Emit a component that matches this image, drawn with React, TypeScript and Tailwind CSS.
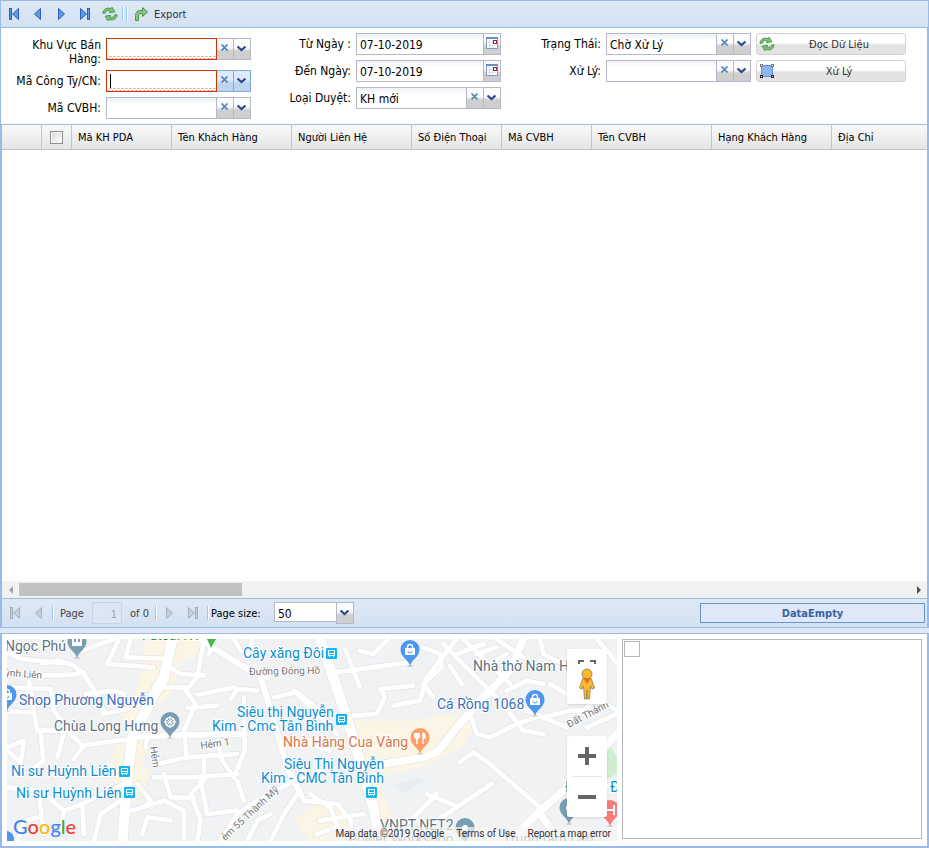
import type { ReactNode } from 'react';

/* ---------- icons ---------- */

type Tone = 'blue' | 'grey';
const tones = {
  blue: { fill: '#5b9be6', edge: '#1f56b5' },
  grey: { fill: '#c9ced6', edge: '#a3abb8' },
};

function NavIcon({ kind, tone }: { kind: 'first' | 'prev' | 'next' | 'last'; tone: Tone }) {
  const { fill, edge } = tones[tone];
  const flip = kind === 'next' || kind === 'last';
  const bar = kind === 'first' || kind === 'last';
  return (
    <svg viewBox="0 0 16 16" className="size-4" aria-hidden="true">
      <g transform={flip ? 'translate(15 0) scale(-1 1)' : undefined} fill={fill} stroke={edge} strokeWidth="0.9">
        {bar && <rect x="3.500" y="2.500" width="2" height="11" />}
        <path d={bar ? 'M12.500 2.500v11L6.500 8z' : 'M10.500 2.500v11L4.500 8z'} strokeLinejoin="round" />
      </g>
    </svg>
  );
}

function RefreshIcon() {
  return (
    <svg viewBox="0 0 18 16" className="size-4" preserveAspectRatio="none" aria-hidden="true">
      <g fill="#7cc576" stroke="#3c8c3c" strokeWidth="0.9" strokeLinejoin="round">
        <path d="M1 7.200C1.400 3.200 5.500 1 10 2.600L11.300 1.200 14.500 5.800 8.500 6.800 9.400 5C6.500 4 4.200 5 3.600 7.200z" />
        <path d="M17 8.800C16.600 12.800 12.500 15 8 13.400L6.700 14.800 3.500 10.200 9.500 9.200 8.600 11C11.500 12 13.800 11 14.400 8.800z" />
      </g>
    </svg>
  );
}

function ExportIcon() {
  return (
    <svg viewBox="0 0 16 16" className="size-4" aria-hidden="true">
      <path
        d="M2.500 14.500V9.500C2.500 6 4.500 4.500 8 4.500H9.500V1.500L14.500 6 9.500 10.500V7.500H8C6.500 7.500 5.500 8.200 5.500 10V14.500z"
        fill="#86c97e"
        stroke="#4a9448"
        strokeLinejoin="round"
      />
    </svg>
  );
}

function ShapeIcon() {
  return (
    <svg viewBox="0 0 16 16" className="size-4" aria-hidden="true">
      <rect x="2.500" y="2.500" width="11" height="11" fill="#8fb4ee" stroke="#5d8bd6" />
      <g fill="#fff" strokeWidth="1">
        <rect x="1.500" y="1.500" width="2" height="2" stroke="#777" />
        <rect x="12.500" y="1.500" width="2" height="2" stroke="#777" />
        <rect x="1.500" y="12.500" width="2" height="2" stroke="#222" />
        <rect x="12.500" y="12.500" width="2" height="2" stroke="#222" />
      </g>
    </svg>
  );
}

function CalendarIcon() {
  return (
    <svg viewBox="0 0 16 20" className="h-5 w-4" aria-hidden="true">
      <rect x="2.500" y="3.500" width="11" height="11" fill="#fff" stroke="#7e99c4" />
      <rect x="2" y="3" width="12" height="2" fill="#6d8cc0" />
      <path d="M4 8.500h8M4 11.500h8M5.500 6v8M8.500 6v8" stroke="#d5deec" />
      <rect x="9.500" y="6.500" width="3" height="3" fill="#fff" stroke="#9c2033" />
    </svg>
  );
}

function ClearIcon() {
  return (
    <svg viewBox="0 0 16 20" className="h-5 w-4" aria-hidden="true">
      <path d="M4.500 5.500l6 6M10.500 5.500l-6 6" stroke="#4a7fb8" strokeWidth="1.700" />
    </svg>
  );
}

function ChevronIcon() {
  return (
    <svg viewBox="0 0 16 20" className="h-5 w-4" aria-hidden="true">
      <path d="M3.500 7.500l4 3.500 4-3.500" fill="none" stroke="#2b4a8b" strokeWidth="2.200" />
    </svg>
  );
}

/* ---------- form ---------- */

const triggerBase = 'flex h-[22px] w-[17px] items-center border-y border-r';
const triggerGrey = `${triggerBase} border-[#b5b8c8] bg-linear-to-b from-[#fbfbfb] from-45% to-[#cfcfcf] to-60%`;
const triggerBlue = `${triggerBase} border-[#7eadd9] bg-linear-to-b from-[#dfeaf8] from-45% to-[#bdd3ef] to-60%`;

type FieldProps = {
  id: string;
  label: string;
  value?: string;
  kind?: 'combo' | 'date';
  invalid?: boolean;
  active?: boolean;
  wrapped?: boolean;
};

function Field({ id, label, value = '', kind = 'combo', invalid, active, wrapped }: FieldProps) {
  const trigger = active ? triggerBlue : triggerGrey;
  return (
    <div className="flex items-start">
      <label
        htmlFor={id}
        className={
          wrapped
            ? 'mr-[5px] w-[100px] text-right leading-[14px]'
            : 'mr-[5px] w-[100px] pt-1 text-right leading-[14px]'
        }
      >
        {label}
      </label>
      <div className="relative flex w-[145px]">
        <input
          id={id}
          type="text"
          defaultValue={value}
          className={
            invalid
              ? 'h-[22px] min-w-0 flex-1 border border-[#cc3300] bg-[repeating-conic-gradient(#f88d8d_0_25%,#fff_0_50%)] bg-[length:4px_3px] bg-bottom bg-repeat-x px-[3px] pt-[2px] outline-none'
              : 'h-[22px] min-w-0 flex-1 border border-[#b5b8c8] bg-linear-to-b from-[#eef1f5] to-white to-30% px-[3px] pt-[2px] outline-none'
          }
        />
        {active && <span className="absolute top-1 left-1 h-[14px] w-px bg-black" />}
        {kind === 'date' ? (
          <button type="button" aria-label={`${label} calendar`} className={trigger}>
            <CalendarIcon />
          </button>
        ) : (
          <>
            <button type="button" aria-label={`${label} clear`} className={trigger}>
              <ClearIcon />
            </button>
            <button type="button" aria-label={`${label} open`} className={trigger}>
              <ChevronIcon />
            </button>
          </>
        )}
      </div>
    </div>
  );
}

function ActionButton({ icon, children }: { icon: ReactNode; children: ReactNode }) {
  return (
    <button
      type="button"
      className="flex h-[22px] w-[150px] items-center rounded-[3px] border border-[#d1d1d1] bg-linear-to-b from-white from-45% to-[#e3e3e3] to-55% pr-[2px] pl-[2px] text-[11px] text-[#333]"
    >
      {icon}
      <span className="flex-1 pt-[2px] text-center">{children}</span>
    </button>
  );
}

function Separator() {
  return <span className="h-[14px] w-[2px] border-l border-[#98c8ff] bg-white" />;
}

/* ---------- map ---------- */

const westRoads = [
  'M9 55L50 75 180 88M115 88L165 80 205 92 240 120 290 200M110 125L205 122 240 115M235 50L330 15',
  'M345 15L310 90 450 100M380 15L365 70 500 75M245 180L330 170 360 180M290 200L298 240 370 225',
  'M9 160L140 165 150 230 200 300 235 335 300 325 385 315M9 232L90 235 100 290 180 290M75 140L90 230',
  'M9 340L60 320 50 385 12 352M110 290L118 380 75 415M180 295L160 370M235 340L210 375',
  'M480 90L530 120 600 125M600 15L580 130 545 170 575 210 540 290 548 370M450 160L550 160M580 182L690 160',
  'M550 222L640 215M548 370L700 360M430 310L425 340M455 340L460 390 548 370M640 320L655 380 690 430',
  'M720 190L722 350 690 430M760 170L700 165 680 195M450 430L560 430 700 420M480 420L500 490 570 490',
  'M400 450L440 500 420 520M380 530L480 500 540 530 540 621M415 600L430 550 500 560M590 440L610 540 700 530',
  'M600 380L600 440 560 480 590 560 580 621M9 460L110 470 180 530 235 510 360 450M105 480L120 600M180 530L170 600',
  'M235 510L240 600M270 621L290 540 350 500M40 621L60 560 105 550M630 15L615 60M690 15L710 50M745 15L735 60',
  'M650 621L700 540 760 500 870 440 930 420M870 440L900 500 1000 510 1040 560 1040 621M800 621L840 540 880 480',
  'M730 621L760 560 800 540M700 440L720 500M870 170L920 220 1000 300M810 190L880 175 960 240M860 330L960 310',
];
const mediumRoads = ['M385 310L460 305 722 300', 'M590 15L640 50 740 110 790 130', 'M770 130L800 230 850 400 890 480'];
const eastRoads = [
  'M75 115L300 85 285 40M105 45L150 160M130 245L200 240 225 190 210 165 310 155M235 15L190 60 150 50',
  'M340 40L390 60 395 100 340 150 370 190M400 30L470 100 560 190M420 95L455 150M440 60L520 30M460 15L600 150',
  'M250 215L330 200 350 130 440 15M500 60L560 40M540 90L590 60M560 15L640 70M590 170L650 140 700 150',
  'M480 240L500 300 540 310 620 270 680 250M590 225L640 290 700 300M640 225L770 280 860 190 921 230',
  'M690 15L700 60 760 90M700 250L780 230 840 230M720 150L770 180M450 385L490 355 540 390 690 520',
  'M380 560L545 450M350 480L435 515M290 570L380 480M0 480L60 520 100 621M30 560L160 540M20 600L80 580',
  'M0 330L60 350M10 420L70 400M860 15L900 60 921 90M830 280L921 240M840 490L921 440',
];
const highways = ['M505 15L480 130 440 200 385 310 372 420 355 621', 'M948 15L988 130 1028 250 1068 380 1108 520 1128 621'];
const avenues = ['M190 395L340 370 385 352 440 280 520 190 600 110 640 15', 'M600 621L680 540 760 470 921 300', 'M690 540L750 621'];

function Roads({ stroke, grow }: { stroke: string; grow: number }) {
  return (
    <g fill="none" stroke={stroke} strokeLinejoin="round" strokeLinecap="round">
      <g strokeWidth={14 + grow}>
        {westRoads.map((d) => (
          <path key={d} d={d} />
        ))}
        {eastRoads.map((d) => (
          <path key={d} d={d} transform="translate(918 0)" />
        ))}
      </g>
      <g strokeWidth={18 + grow}>
        {mediumRoads.map((d) => (
          <path key={d} d={d} />
        ))}
      </g>
      <g strokeWidth={23 + grow}>
        {avenues.map((d) => (
          <path key={d} d={d} transform="translate(918 0)" />
        ))}
      </g>
      <g strokeWidth={31 + grow}>
        {highways.map((d) => (
          <path key={d} d={d} />
        ))}
      </g>
    </g>
  );
}

function Pin({ x, y, color, children }: { x: number; y: number; color: string; children?: ReactNode }) {
  return (
    <g transform={`translate(${x} ${y})`}>
      <ellipse cx="0" cy="0" rx="3" ry="1" fill="#000" opacity="0.15" />
      <path d="M0 0C-2 -7 -9.500 -9 -9.500 -16.500A9.500 9.500 0 0 1 9.500 -16.500C9.500 -9 2 -7 0 0z" fill={color} />
      <g transform="translate(0 -16)">{children}</g>
    </g>
  );
}

const bag = (
  <g>
    <path d="M-2.500 -1v-2a2.500 2.500 0 0 1 5 0v2" fill="none" stroke="#fff" strokeWidth="1.400" />
    <rect x="-5" y="-2" width="10" height="7" rx="1" fill="#fff" />
    <path d="M-2 1a2 2 0 0 0 4 0" fill="none" stroke="#4c97f0" />
  </g>
);

function BusStop({ x, y }: { x: number; y: number }) {
  return (
    <g transform={`translate(${x} ${y})`}>
      <rect width="11" height="11" rx="1" fill="#12b5f5" />
      <path d="M2.500 2.500h6v5h-6zM2.500 5.500h6M3.500 7.500v1.500M7.500 7.500v1.500" fill="none" stroke="#fff" />
    </g>
  );
}

function MapDrawing() {
  return (
    <svg
      viewBox="3 5 610 202"
      preserveAspectRatio="xMinYMin slice"
      className="block h-[202px] w-full"
      fontFamily="Roboto, sans-serif"
      fontSize="14"
    >
      <rect x="0" y="0" width="620" height="210" fill="#f1f2f4" />
      <g transform="scale(0.33333)">
        <path d="M425 15H600L585 65 530 80 500 180 450 225 425 300 435 330 415 400 440 415 405 500 370 510 330 440 315 400 330 335 375 320 350 240 390 190 415 100z" fill="#faf5e4" />
        <path d="M1048 260H1220L1385 235 1410 285 1370 345 1250 400 1120 430 1170 560 1110 600 1060 400z" fill="#faf5e4" />
        <path d="M918 520L1010 500 1050 560 1010 621H918L870 560z" fill="#faf5e4" />
        <path d="M1170 455L1240 430 1260 440 1200 480z" fill="#e8edf0" />
        <path d="M1808 320L1840 370V420L1770 450z" fill="#cdeecf" />
        <Roads stroke="#e2e4e7" grow={4} />
        <Roads stroke="#ffffff" grow={0} />
      </g>

      <Pin x={73} y={24} color="#7a9eb1">
        <path d="M-5 4v-7h2v3h2v-4h2v4h2v-3h2v7z" fill="#fff" />
      </Pin>
      <path d="M203 5h9l-5 9z" fill="#4db748" />
      <Pin x={3} y={77} color="#4c97f0">
        {bag}
      </Pin>
      <Pin x={166} y={104} color="#7a9eb1">
        <circle r="4.500" fill="none" stroke="#fff" strokeWidth="1.500" />
        <path d="M-6 0H6M0 -6V6M-4 -4L4 4M4 -4L-4 4" stroke="#fff" />
      </Pin>
      <Pin x={406} y={32} color="#4c97f0">
        {bag}
      </Pin>
      <Pin x={531} y={82} color="#4c97f0">
        {bag}
      </Pin>
      <Pin x={416} y={120} color="#ff9e67">
        <path d="M-3 -5v11M3 -5v11" stroke="#fff" strokeWidth="1.500" />
        <path d="M-6 -5v3a3 3 0 0 0 6 0v-3z" fill="#fff" />
        <path d="M3 -6c3 1 3 5 2 7h-2z" fill="#fff" />
      </Pin>
      <Pin x={461} y={210} color="#7a9eb1">
        <circle r="3" fill="#fff" />
      </Pin>
      <Pin x={565} y={190} color="#7a9eb1">
        <circle r="3" fill="#fff" />
      </Pin>
      <Pin x={606} y={192} color="#f77b7b">
        <path d="M-4 -5V5M4 -5V5M-4 0H4" stroke="#fff" strokeWidth="2" />
      </Pin>
      <circle cx="2" cy="205" r="8" fill="#4c97f0" />

      <BusStop x={322} y={14} />
      <BusStop x={332} y={80} />
      <BusStop x={362} y={153} />
      <BusStop x={115} y={132} />
      <BusStop x={120} y={153} />

      <g stroke="#ffffff" strokeWidth="2" strokeLinejoin="round" paintOrder="stroke">
        <g fill="#5d747f">
          <text x="1" y="17">Ngọc Phú</text>
          <text x="50" y="97">Chùa Long Hưng</text>
          <text x="469" y="37">Nhà thờ Nam Hòa</text>
          <text x="376" y="196">VNPT NET2</text>
          <text x="344" y="210">Power Workshop</text>
          <text x="499" y="210">Trung tâm Lap</text>
        </g>
        <text x="138" y="6" fill="#1c8c3c">Futsal K1</text>
        <g fill="#3d71b8">
          <text x="15" y="71">Shop Phương Nguyễn</text>
          <text x="433" y="75">Cá Rồng 1068</text>
        </g>
        <text x="279" y="113" fill="#d8764a">Nhà Hàng Cua Vàng</text>
        <g fill="#0c8fcf">
          <text x="239" y="24">Cây xăng Đôi</text>
          <text x="7" y="142">Ni sư Huỳnh Liên</text>
          <text x="12" y="164">Ni sư Huỳnh Liên</text>
          <text x="233" y="83">Siêu thị Nguyễn</text>
          <text x="208" y="97">Kim - Cmc Tân Bình</text>
          <text x="280" y="135">Siêu Thị Nguyễn</text>
          <text x="257" y="149">Kim - CMC Tân Bình</text>
          <text x="561" y="158">Đ</text>
          <text x="606" y="158">Đ</text>
        </g>
        <g fill="#757575" fontSize="10">
          <text x="1" y="42" transform="rotate(4 1 42)">ỳnh Liên</text>
          <text x="245" y="41" transform="rotate(-1 245 41)">Đường Đông Hồ</text>
          <text x="197" y="115" transform="rotate(-8 197 115)">Hẻm 1</text>
          <text x="146" y="113" transform="rotate(82 146 113)">Hẻm</text>
          <text x="221" y="207" transform="rotate(-43 221 207)">ẻm 55 Thành Mỹ</text>
          <text x="565" y="94" transform="rotate(-28 565 94)">Đất Thánh</text>
        </g>
      </g>
    </svg>
  );
}

function Pegman() {
  return (
    <svg viewBox="0 0 18 32" className="h-8 w-[18px]" aria-hidden="true">
      <g fill="#fdb92c" stroke="#8a7a58" strokeWidth="0.800">
        <path d="M5 10h8l3.500 10-2.500 1-1.500-3-1 13H9.500L9 22l-.5 9H6.500l-1-13L4 21l-2.500-1z" />
        <circle cx="9" cy="6" r="5" />
      </g>
      <path d="M5.500 10.500h7L9 16z" fill="#e0701c" />
    </svg>
  );
}

function MapPanel() {
  return (
    <section aria-label="Map" className="relative h-[202px] min-w-0 flex-1 overflow-hidden">
      <MapDrawing />
      <div className="absolute top-[10px] right-[10px] flex h-[55px] w-10 flex-col items-center justify-end rounded-[2px] bg-white pb-1 shadow">
        <svg viewBox="0 0 18 4" className="h-1 w-[18px]" aria-hidden="true">
          <path d="M1 4V1h5M12 1h5v3" fill="none" stroke="#666" strokeWidth="2" />
        </svg>
        <button type="button" aria-label="Street View" className="mt-1">
          <Pegman />
        </button>
      </div>
      <div className="absolute top-[97px] right-[10px] w-10 rounded-[2px] bg-white shadow">
        <button type="button" aria-label="Zoom in" className="flex h-10 w-10 items-center justify-center">
          <svg viewBox="0 0 18 18" className="size-[18px]" aria-hidden="true">
            <path d="M0 9h18M9 0v18" stroke="#666" strokeWidth="4" />
          </svg>
        </button>
        <div className="mx-[5px] h-px bg-[#e6e6e6]" />
        <button type="button" aria-label="Zoom out" className="flex h-10 w-10 items-center justify-center">
          <svg viewBox="0 0 18 18" className="size-[18px]" aria-hidden="true">
            <path d="M0 9h18" stroke="#666" strokeWidth="4" />
          </svg>
        </button>
      </div>
      <div className="absolute bottom-[1px] left-[6px] flex font-[Lato,sans-serif] text-[20px] leading-[28px] font-medium">
        <span className="text-[#4285f4]">G</span>
        <span className="text-[#ea4335]">o</span>
        <span className="text-[#fbbc05]">o</span>
        <span className="text-[#4285f4]">g</span>
        <span className="text-[#34a853]">l</span>
        <span className="text-[#ea4335]">e</span>
      </div>
      <div className="absolute right-0 bottom-0 flex h-[14px] gap-3 bg-[#f5f5f5]/70 px-[6px] font-[Roboto,sans-serif] text-[10px] leading-[14px] text-[#333]">
        <span>Map data ©2019 Google</span>
        <a href="#terms">Terms of Use</a>
        <a href="#report">Report a map error</a>
      </div>
    </section>
  );
}

/* ---------- grid ---------- */

const columns = [
  { title: 'Mã KH PDA', width: 'w-[100px]' },
  { title: 'Tên Khách Hàng', width: 'w-[120px]' },
  { title: 'Người Liên Hệ', width: 'w-[120px]' },
  { title: 'Số Điện Thoại', width: 'w-[90px]' },
  { title: 'Mã CVBH', width: 'w-[90px]' },
  { title: 'Tên CVBH', width: 'w-[120px]' },
  { title: 'Hạng Khách Hàng', width: 'w-[120px]' },
  { title: 'Địa Chỉ', width: 'w-auto' },
];

function CustomerGrid() {
  return (
    <section className="flex flex-1 flex-col border-x-2 border-t border-[#99bbe8]">
      <div className="flex-1">
        <table className="w-full table-fixed border-separate border-spacing-0 text-left text-[11px]">
          <thead>
            <tr className="h-[25px] bg-linear-to-b from-[#f9f9f9] to-[#e3e4e6]">
              <th className="w-10 border-r border-b border-[#c5c5c5]" />
              <th className="w-[30px] border-r border-b border-[#c5c5c5] p-0">
                <input
                  type="checkbox"
                  aria-label="Select all"
                  className="mx-auto block size-[13px] appearance-none border border-[#8f8f8f] bg-linear-to-br from-[#d4d8de] to-white shadow-[inset_0_0_0_1px_#f4f4f4]"
                />
              </th>
              {columns.map((c) => (
                <th key={c.title} className={`${c.width} border-r border-b border-[#c5c5c5] px-[6px] pt-[2px] pb-0 font-normal whitespace-nowrap last:border-r-0`}>
                  {c.title}
                </th>
              ))}
            </tr>
          </thead>
          <tbody />
        </table>
      </div>
      <div className="flex h-[17px] items-center bg-[#f1f1f1]">
        <button type="button" aria-label="Scroll left" className="flex size-[17px] items-center justify-center">
          <svg viewBox="0 0 8 8" className="size-2" aria-hidden="true">
            <path d="M6 0v8L2 4z" fill="#a3a3a3" />
          </svg>
        </button>
        <div className="flex-1">
          <div className="h-[13px] w-1/4 bg-[#c1c1c1]" />
        </div>
        <button type="button" aria-label="Scroll right" className="flex size-[17px] items-center justify-center">
          <svg viewBox="0 0 8 8" className="size-2" aria-hidden="true">
            <path d="M2 0v8l4-4z" fill="#505050" />
          </svg>
        </button>
      </div>
      <div className="flex h-[30px] items-center border-y border-[#99bbe8] bg-linear-to-b from-[#dfe9f5] to-[#d3e1f1] pr-[2px] pl-[5px] text-[11px] text-[#444]">
        <div className="flex items-center gap-2">
          <button type="button" aria-label="First page" disabled>
            <NavIcon kind="first" tone="grey" />
          </button>
          <button type="button" aria-label="Previous page" disabled>
            <NavIcon kind="prev" tone="grey" />
          </button>
        </div>
        <div className="ml-[5px] flex items-center">
          <Separator />
        </div>
        <label htmlFor="page" className="ml-[6px] w-8 pt-[2px]">
          Page
        </label>
        <input
          id="page"
          type="text"
          disabled
          defaultValue="1"
          className="h-[22px] w-[30px] border border-[#c9d3e2] bg-[#dde7f3] px-1 pt-[2px] text-right text-[#9aa3b0]"
        />
        <span className="ml-2 w-[25px] pt-[2px] whitespace-nowrap">of 0</span>
        <Separator />
        <div className="mx-[5px] flex items-center gap-2">
          <button type="button" aria-label="Next page" disabled>
            <NavIcon kind="next" tone="grey" />
          </button>
          <button type="button" aria-label="Last page" disabled>
            <NavIcon kind="last" tone="grey" />
          </button>
        </div>
        <Separator />
        <label htmlFor="page-size" className="ml-[2px] w-[63px] pt-[2px] text-black">
          Page size:
        </label>
        <div className="relative w-20">
          <select
            id="page-size"
            defaultValue="50"
            className="h-5 w-full appearance-none border border-[#b5b8c8] bg-white px-[3px] pt-[2px] text-[12px] text-black outline-none"
          >
            <option>50</option>
            <option>100</option>
          </select>
          <span className="pointer-events-none absolute inset-y-0 right-0 flex w-[18px] items-center border border-[#b5b8c8] bg-linear-to-b from-[#fbfbfb] from-45% to-[#cfcfcf] to-60%">
            <ChevronIcon />
          </span>
        </div>
        <output className="ml-auto h-5 w-[225px] border border-[#6593cf] bg-[#dfe8f6] pt-[1px] text-center leading-[18px] font-bold text-[#3764a0]">
          DataEmpty
        </output>
      </div>
    </section>
  );
}

/* ---------- page ---------- */

export default function App() {
  return (
    <div className="flex min-h-screen flex-col bg-[#dfe8f6] font-['DejaVu_Sans_Condensed','DejaVu_Sans',sans-serif] text-[12px] text-black">
      <header className="flex h-7 items-center gap-2 border border-[#99bbe8] bg-linear-to-b from-[#dfe9f5] to-[#d3e1f1] pl-[5px] text-[11px] text-[#333]">
        <button type="button" aria-label="First">
          <NavIcon kind="first" tone="blue" />
        </button>
        <button type="button" aria-label="Previous">
          <NavIcon kind="prev" tone="blue" />
        </button>
        <button type="button" aria-label="Next">
          <NavIcon kind="next" tone="blue" />
        </button>
        <button type="button" aria-label="Last">
          <NavIcon kind="last" tone="blue" />
        </button>
        <button type="button" aria-label="Refresh">
          <RefreshIcon />
        </button>
        <div className="-ml-1 flex gap-[2px]">
          <Separator />
          <Separator />
        </div>
        <button type="button" className="-ml-[3px] flex items-center gap-[5px]">
          <ExportIcon />
          <span className="pt-[2px]">Export</span>
        </button>
      </header>

      <main className="flex flex-1 flex-col bg-white">
        <form className="flex flex-wrap border-r-2 border-l border-[#99bbe8] pb-[5px]">
          <div className="flex w-[250px] flex-col pt-[10px]">
            <div className="h-8">
              <Field id="area" label="Khu Vực Bán Hàng:" invalid wrapped />
            </div>
            <div className="flex flex-col gap-[5px]">
              <Field id="company" label="Mã Công Ty/CN:" invalid active />
              <Field id="cvbh" label="Mã CVBH:" />
            </div>
          </div>
          <div className="flex w-[250px] flex-col gap-[5px] pt-[5px]">
            <Field id="from" label="Từ Ngày :" value="07-10-2019" kind="date" />
            <Field id="to" label="Đến Ngày:" value="07-10-2019" kind="date" />
            <Field id="type" label="Loại Duyệt:" value="KH mới" />
          </div>
          <div className="flex w-[250px] flex-col gap-[5px] pt-[5px]">
            <Field id="status" label="Trạng Thái:" value="Chờ Xử Lý" />
            <Field id="process" label="Xử Lý:" />
          </div>
          <div className="flex flex-col gap-[5px] pt-[5px] pl-[5px]">
            <ActionButton icon={<RefreshIcon />}>Đọc Dữ Liệu</ActionButton>
            <ActionButton icon={<ShapeIcon />}>Xử Lý</ActionButton>
          </div>
        </form>
        <CustomerGrid />
      </main>

      <footer className="mt-[5px] flex gap-[5px] border-t border-r-2 border-b-2 border-l-2 border-[#99bbe8] bg-white p-[5px]">
        <MapPanel />
        <div className="mb-[2px] w-[300px] border border-[#b5b8b8] p-[1px]">
          <div className="size-4 border border-[#b5b8b8]" />
        </div>
      </footer>
    </div>
  );
}
